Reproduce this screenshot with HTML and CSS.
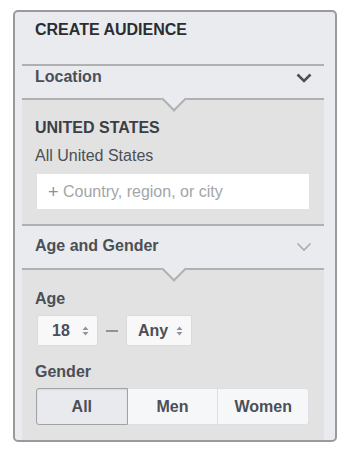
FILE: index.html
```html
<!DOCTYPE html>
<html lang="en">
<head>
  <meta charset="UTF-8">
  <title>Create Audience</title>
  <link rel="stylesheet" href="styles.css">
</head>
<body>
  <div class="panel">
    <div class="panel-title">CREATE AUDIENCE</div>

    <div class="row-head row-location">
      <span>Location</span>
      <svg class="chevron" width="16" height="10" viewBox="0 0 16 10"><polyline points="1.5,1.5 8,8 14.5,1.5" fill="none" stroke="#4b4f56" stroke-width="2.6"/></svg>
    </div>
    <div class="section section-location">
      <div class="loc-name">UNITED STATES</div>
      <div class="loc-sub">All United States</div>
      <div class="loc-input"><span class="plus">+</span> Country, region, or city</div>
    </div>

    <div class="row-head row-age">
      <span>Age and Gender</span>
      <svg class="chevron" width="16" height="10" viewBox="0 0 16 10"><polyline points="1.5,1.5 8,8 14.5,1.5" fill="none" stroke="#a9abaf" stroke-width="1.6"/></svg>
    </div>
    <div class="section section-age">
      <div class="field-label">Age</div>
      <div class="age-range">
        <div class="select select-min">
          <span>18</span>
          <svg width="7" height="10" viewBox="0 0 7 10"><path d="M3.5 0.5 L6.5 4 H0.5 Z M3.5 9.5 L6.5 6 H0.5 Z" fill="#8d949e"/></svg>
        </div>
        <span class="dash"></span>
        <div class="select select-max">
          <span>Any</span>
          <svg width="7" height="10" viewBox="0 0 7 10"><path d="M3.5 0.5 L6.5 4 H0.5 Z M3.5 9.5 L6.5 6 H0.5 Z" fill="#8d949e"/></svg>
        </div>
      </div>
      <div class="field-label gender-label">Gender</div>
      <div class="segmented">
        <div class="segment active">All</div>
        <div class="segment">Men</div>
        <div class="segment">Women</div>
      </div>
    </div>
  </div>
</body>
</html>
```

FILE: styles.css
```css
:root {
  --panel-bg: #eaebee;
  --section-bg: #e2e2e3;
  --line-color: #b0b0b3;
  --text-dark: #2b2d31;
  --text-color: #4b4f56;
  --font-family: 'Liberation Sans', Arial, sans-serif;
}
* {
  box-sizing: border-box;
  margin: 0;
  padding: 0;
}
body {
  font-family: var(--font-family);
  background: #ffffff;
  padding: 10px 0 0 13px;
}
.panel {
  width: 324px;
  height: 432px;
  background: var(--panel-bg);
  border: 2px solid #9a9a9c;
  border-radius: 5px;
  padding: 0 11px 0 7px;
  display: flex;
  flex-direction: column;
  color: var(--text-color);
  font-size: 16px;
  line-height: 20px;
}
.panel-title {
  height: 54px;
  padding: 8px 0 0 13px;
  font-weight: 700;
  color: var(--text-dark);
}
.row-head {
  display: flex;
  justify-content: space-between;
  border-top: 2px solid var(--line-color);
  padding: 0 12px 0 13px;
  font-weight: 700;
}
.row-location {
  height: 35px;
  padding-top: 1px;
}
.row-location .chevron {
  margin-top: 6px;
}
.row-age {
  height: 45px;
  padding-top: 10px;
}
.row-age .chevron {
  margin-top: 6px;
}
.section {
  position: relative;
  background: var(--section-bg);
  border-top: 2px solid var(--line-color);
  padding: 18px 15px 15px 13px;
  display: flex;
  flex-direction: column;
}
/* the little pointer under each header */
.section::before {
  content: '';
  position: absolute;
  left: 143px;
  top: -10px;
  width: 16px;
  height: 16px;
  background: var(--panel-bg);
  border-right: 2px solid var(--line-color);
  border-bottom: 2px solid var(--line-color);
  transform: rotate(45deg);
}
.loc-name {
  font-weight: 700;
  color: #3b3e44;
}
.loc-sub {
  margin-top: 8px;
}
.loc-input {
  margin: 8px 0 0 2px;
  height: 35px;
  background: #ffffff;
  padding-left: 11px;
  display: flex;
  align-items: center;
  color: #a3a5a9;
  white-space: pre;
}
.plus {
  color: #8f9298;
  font-size: 18px;
}
.section-age {
  flex: 1;
  padding-top: 19px;
}
.field-label {
  font-weight: 700;
}
.age-range {
  display: flex;
  align-items: center;
  margin-top: 6px;
  padding-left: 2px;
}
.select {
  height: 31px;
  background: #f8f8f9;
  border: 1px solid #dadbdd;
  border-radius: 2px;
  display: flex;
  align-items: center;
  font-weight: 700;
}
.select-min {
  width: 61px;
  padding-left: 14px;
  gap: 12px;
}
.select-max {
  width: 66px;
  padding-left: 11px;
  gap: 8px;
}
.dash {
  width: 12px;
  height: 2px;
  background: #8f9298;
  margin: 0 8px;
}
.gender-label {
  margin-top: 16px;
}
.segmented {
  display: flex;
  margin: 6px 0 0 1px;
  height: 37px;
}
.segment {
  flex: 1;
  display: flex;
  align-items: center;
  justify-content: center;
  font-weight: 700;
  background: #f6f7f9;
  border: 1px solid #dedfe2;
  border-left: none;
}
.segment:first-child {
  border-left: 1px solid #dedfe2;
  border-radius: 3px 0 0 3px;
}
.segment:last-child {
  border-radius: 0 3px 3px 0;
}
.segment.active {
  background: #e9eaed;
  border: 1px solid #a0a2a6;
  box-shadow: inset 0 1px 2px rgba(0, 0, 0, 0.08);
}
```
